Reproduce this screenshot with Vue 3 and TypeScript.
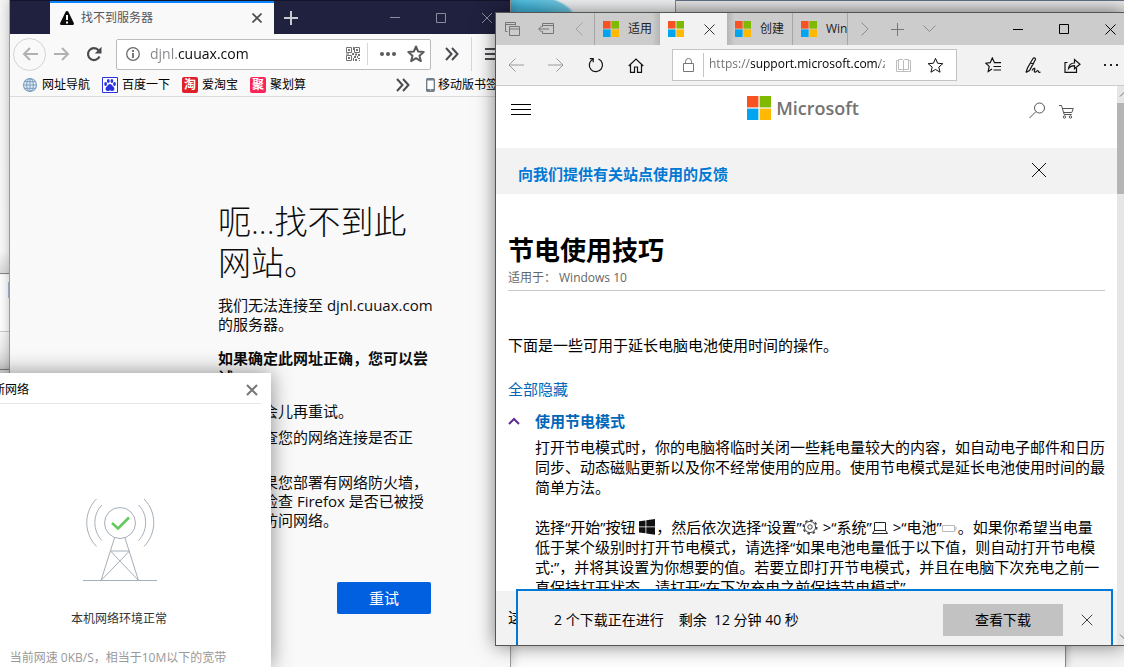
<script setup lang="ts">
interface Bookmark {
  label: string
  kind: 'globe' | 'paw' | 'tao' | 'ju'
}

const bookmarks: Bookmark[] = [
  { label: '网址导航', kind: 'globe' },
  { label: '百度一下', kind: 'paw' },
  { label: '爱淘宝', kind: 'tao' },
  { label: '聚划算', kind: 'ju' },
]

const suggestions: string[] = [
  '过会儿再重试。',
  '检查您的网络连接是否正常。',
  '如果您部署有网络防火墙，请检查 Firefox 是否已被授权访问网络。',
]
</script>

<template>
  <div class="desktop">
    <svg class="defs" width="0" height="0" aria-hidden="true">
      <symbol id="ms" viewBox="0 0 24 24">
        <path fill="#f65222" d="M0 0h11.400v11.400H0z" />
        <path fill="#7fba00" d="M12.600 0H24v11.400H12.600z" />
        <path fill="#00a4ef" d="M0 12.600h11.400V24H0z" />
        <path fill="#ffb900" d="M12.600 12.600H24V24H12.600z" />
      </symbol>
      <symbol id="cross" viewBox="0 0 16 16">
        <path fill="none" stroke="currentColor" d="M1 1l14 14M15 1L1 15" />
      </symbol>
      <symbol id="star" viewBox="0 0 18 18">
        <path fill="none" stroke="currentColor" stroke-linejoin="round" d="M9 1.500l2.200 5.100 5.500.5-4.200 3.600 1.300 5.400L9 13.200l-4.800 2.900 1.300-5.400-4.200-3.600 5.500-.5z" />
      </symbol>
      <symbol id="more-chevrons" viewBox="0 0 14 14">
        <path fill="none" stroke="currentColor" stroke-width="2" d="M1 1l5.500 6L1 13M7 1l5.500 6L7 13" />
      </symbol>
    </svg>

    <div class="back back-left"><i class="mark"></i></div>
    <div class="back back-side"><i class="chip"></i></div>
    <div class="back back-art"></div>
    <div class="back back-bar"></div>
    <div class="back back-low"></div>

    <!-- Firefox -->
    <section class="window firefox" aria-label="Firefox">
      <header class="fx-titlebar">
        <div class="fx-tab">
          <svg width="14" height="14" viewBox="0 0 14 14"><path fill="#0c0c0d" d="M7 0c.7 0 1.200.4 1.500 1l5.200 10.800c.6 1.200-.1 2.200-1.300 2.200H1.600C.4 14-.3 13 .3 11.800L5.500 1C5.800.4 6.300 0 7 0z" /><path stroke="#fff" stroke-width="2" d="M7 4v5M7 10.500v2" /></svg>
          <span class="fx-tab-title">找不到服务器</span>
          <button class="icon fx-tab-close" aria-label="关闭标签页"><svg width="10" height="10" viewBox="0 0 10 10"><path stroke="#4a4a4f" stroke-width="1.600" d="M.5.5l9 9M9.500.5l-9 9" /></svg></button>
        </div>
        <button class="icon fx-new" aria-label="新建标签页"><svg width="14" height="14" viewBox="0 0 14 14"><path stroke="#c9c9d0" stroke-width="2" d="M7 0v14M0 7h14" /></svg></button>
        <div class="spacer"></div>
        <button class="icon fx-ctl" aria-label="最小化"><svg width="10" height="10"><path stroke="#8b8b9d" d="M0 4.500h10" /></svg></button>
        <button class="icon fx-ctl" aria-label="最大化"><svg width="10" height="10"><path fill="none" stroke="#8b8b9d" d="M.5.5h9v9h-9z" /></svg></button>
        <button class="icon fx-ctl" aria-label="关闭"><svg width="10" height="10"><path stroke="#8b8b9d" d="M0 0l10 10M10 0L0 10" /></svg></button>
      </header>

      <nav class="fx-toolbar" aria-label="导航">
        <button class="icon fx-back" aria-label="后退"><svg width="16" height="14" viewBox="0 0 16 14"><path fill="none" stroke="#b1b1b3" stroke-width="2" d="M16 7H2M8 1L2 7l6 6" /></svg></button>
        <button class="icon fx-tool" aria-label="前进"><svg width="16" height="14" viewBox="0 0 16 14"><path fill="none" stroke="#b1b1b3" stroke-width="2" d="M0 7h14M8 1l6 6-6 6" /></svg></button>
        <button class="icon fx-tool" aria-label="刷新"><svg width="16" height="16" viewBox="0 0 16 16"><path fill="none" stroke="#4a4a4f" stroke-width="2.200" d="M12.600 4.200A6 6 0 1 0 13.500 10.500" /><path fill="#4a4a4f" d="M15.500.8v6.700H8.800z" /></svg></button>
        <div class="fx-address">
          <svg width="14" height="14" viewBox="0 0 14 14"><circle cx="7" cy="7" r="6.300" fill="none" stroke="#6b6b6f" stroke-width="1.300" /><path stroke="#6b6b6f" stroke-width="1.800" d="M7 6v5M7 3v2" /></svg>
          <input class="fx-url" type="text" value="djnl.cuuax.com" aria-label="地址">
          <svg class="qr" width="14" height="14" viewBox="0 0 14 14"><path fill="none" stroke="#737377" d="M.5.5h5v5h-5zM8.500.5h5v5h-5zM.5 8.500h5v5h-5z" /><path fill="#737377" d="M2 2h2v2H2zM10 2h2v2h-2zM2 10h2v2H2zM7 0h1v3H7zM6 6h2v2H6zM0 6.500h3v1H0zM9 6.500h2v2H9zM12 7h2v2h-2zM8 9h2v2H8zM11 9h1v2h-1zM7 11h1v3H7zM9 12h2v2H9zM12 11h2v1h-2zM13 13h1v1h-1z" /></svg>
          <i class="fx-rule"></i>
          <button class="icon dots" aria-label="页面操作"><svg width="16" height="4"><circle cx="2" cy="2" r="2" /><circle cx="8" cy="2" r="2" /><circle cx="14" cy="2" r="2" /></svg></button>
          <button class="icon fx-star" aria-label="添加书签"><svg width="18" height="18"><use href="#star" /></svg></button>
        </div>
        <button class="icon fx-more" aria-label="更多工具"><svg width="14" height="14"><use href="#more-chevrons" /></svg></button>
        <i class="fx-menu-rule"></i>
        <button class="icon fx-menu" aria-label="菜单"><svg width="16" height="12"><path stroke="#4a4a4f" stroke-width="2" d="M0 1h16M0 6h16M0 11h16" /></svg></button>
      </nav>

      <nav class="fx-bookmarks" aria-label="书签">
        <a v-for="b in bookmarks" :key="b.label" href="#" class="bookmark">
          <svg v-if="b.kind === 'globe'" width="16" height="16" viewBox="0 0 16 16"><circle cx="8" cy="8" r="6.500" fill="#e4eef8" stroke="#86a3c0" stroke-width="1.200" /><path fill="none" stroke="#789bbd" d="M8 1.500v13M1.500 8h13M2.600 4.700h10.800M2.600 11.300h10.800" /><ellipse cx="8" cy="8" rx="3.300" ry="6.500" fill="none" stroke="#789bbd" /></svg>
          <svg v-else-if="b.kind === 'paw'" width="16" height="16" viewBox="0 0 16 16"><path fill="#fff" stroke="#2932e1" d="M.5.5h15v15H.5z" /><g fill="#2932e1"><ellipse cx="3.600" cy="7" rx="1.400" ry="1.900" /><ellipse cx="6.300" cy="4" rx="1.400" ry="2" /><ellipse cx="9.900" cy="4" rx="1.400" ry="2" /><ellipse cx="12.500" cy="7" rx="1.400" ry="1.900" /><path d="M8 7c1.600 0 2.200 1.700 3.400 2.700 1.700 1.500 1.100 4.200-.9 4.200-1.200 0-1.600-.5-2.500-.5s-1.300.5-2.500.5c-2 0-2.600-2.700-.9-4.200C5.800 8.700 6.400 7 8 7z" /></g></svg>
          <span v-else class="stamp" :class="b.kind">{{ b.kind === 'tao' ? '淘' : '聚' }}</span>
          <span>{{ b.label }}</span>
        </a>
        <div class="spacer"></div>
        <button class="icon" aria-label="更多书签"><svg class="grey" width="14" height="14"><use href="#more-chevrons" /></svg></button>
        <a href="#" class="bookmark mobile">
          <svg width="9" height="14" viewBox="0 0 9 14"><rect x=".7" y=".7" width="7.600" height="12.600" rx="1" fill="#fff" stroke="#73808c" stroke-width="1.400" /><path stroke="#73808c" stroke-width="2" d="M1 1.500h7M1 12h7" /><path stroke="#fff" d="M4 12h1" /></svg>
          <span>移动版书签</span>
        </a>
      </nav>

      <main class="fx-page">
        <h1>呃...找不到此网站。</h1>
        <p>我们无法连接至 djnl.cuuax.com 的服务器。</p>
        <p class="strong">如果确定此网址正确，您可以尝试：</p>
        <ul>
          <li v-for="s in suggestions" :key="s">{{ s }}</li>
        </ul>
        <button class="retry">重试</button>
      </main>
    </section>

    <!-- Network check dialog -->
    <section class="window net" role="dialog" aria-label="诊断网络">
      <header class="net-head">
        <span>诊断网络</span>
        <button class="icon" aria-label="关闭"><svg width="12" height="12" viewBox="0 0 12 12"><path stroke="#777" stroke-width="2" d="M1 1l10 10M11 1L1 11" /></svg></button>
      </header>
      <svg class="tower" width="74" height="84" viewBox="0 0 74 84" fill="none" stroke="#a5afb9">
        <circle cx="37" cy="25" r="15.500" />
        <path d="M13.500 1C.5 14 .5 35 13.500 48.500M19 7c-9.500 9-9.500 26 0 35.500M61 1c13 13 13 34 0 47.500M55.500 7c9.500 9 9.500 26 0 35.500" />
        <path d="M31.500 40L18 82.500M42 40l13.500 42.500M27.500 53h19M27.500 53l28 29.500M46.500 53L18 82.500M0 82.500h74" />
        <path stroke="#5fc95c" stroke-width="2.500" d="M29 25l6 5.500L46 19.500" />
      </svg>
      <p class="net-state">本机网络环境正常</p>
      <p class="net-speed">当前网速 0KB/S，相当于10M以下的宽带</p>
    </section>

    <!-- Edge -->
    <section class="window edge" aria-label="Microsoft Edge">
      <header class="ed-tabs">
        <div class="ed-lead">
          <button class="icon" aria-label="已搁置的标签页"><svg width="15" height="15" viewBox="0 0 15 15" fill="none" stroke="#767676"><path d="M2.500 9.500h-2v-9h10v3M.5 2.500h10M4.500 4.500h10v9h-10zM4.500 7h10" /></svg></button>
          <button class="icon" aria-label="搁置标签页"><svg width="16" height="12" viewBox="0 0 16 12" fill="none" stroke="#767676"><path d="M4.500 4V.5h11v10h-11V8M4.500 2.500h11M11 6H.8M3.500 3L.8 6l2.700 3" /></svg></button>
          <button class="icon" aria-label="向左滚动"><svg width="8" height="14" viewBox="0 0 8 14" fill="none" stroke="#a3a3a3"><path d="M7.500.5L1 7l6.500 6.500" /></svg></button>
        </div>
        <button class="ed-tab near"><svg width="16" height="16"><use href="#ms" /></svg><span>适用</span></button>
        <div class="ed-tab active"><svg width="16" height="16"><use href="#ms" /></svg><button class="icon" aria-label="关闭标签页"><svg width="11" height="11" viewBox="0 0 11 11"><path stroke="#333" d="M.5.5l10 10M10.500.5l-10 10" /></svg></button></div>
        <button class="ed-tab after"><svg width="16" height="16"><use href="#ms" /></svg><span>创建</span></button>
        <button class="ed-tab cut"><svg width="16" height="16"><use href="#ms" /></svg><span>Windows</span></button>
        <div class="ed-tail">
          <button class="icon" aria-label="向右滚动"><svg width="8" height="14" viewBox="0 0 8 14" fill="none" stroke="#8c8c8c"><path d="M.5.5L7 7 .5 13.500" /></svg></button>
          <button class="icon" aria-label="新建标签页"><svg width="13" height="13"><path stroke="#777" d="M6.500 0v13M0 6.500h13" /></svg></button>
          <button class="icon" aria-label="标签页预览"><svg width="13" height="8" viewBox="0 0 13 8" fill="none" stroke="#8c8c8c"><path d="M.5.5l6 6 6-6" /></svg></button>
        </div>
        <div class="spacer"></div>
        <div class="ed-ctls">
          <button class="icon" aria-label="最小化"><svg width="10" height="10"><path stroke="#000" d="M0 5.500h10" /></svg></button>
          <button class="icon" aria-label="最大化"><svg width="10" height="10"><path fill="none" stroke="#000" d="M.5.5h9v9h-9z" /></svg></button>
          <button class="icon" aria-label="关闭"><svg width="11" height="11"><path stroke="#000" d="M.5.5l10 10M10.500.5l-10 10" /></svg></button>
        </div>
      </header>

      <nav class="ed-toolbar" aria-label="导航">
        <button class="icon" aria-label="后退"><svg width="16" height="14" viewBox="0 0 16 14" fill="none" stroke="#9b9b9b"><path d="M16 7H1M7.500.5L1 7l6.500 6.500" /></svg></button>
        <button class="icon" aria-label="前进"><svg width="16" height="14" viewBox="0 0 16 14" fill="none" stroke="#9b9b9b"><path d="M0 7h15M8.500.5L15 7l-6.500 6.500" /></svg></button>
        <button class="icon" aria-label="刷新"><svg width="16" height="16" viewBox="0 0 16 16" fill="none" stroke="#111" stroke-width="1.200"><path d="M10.500 2A6.600 6.600 0 1 1 4.500 2.400M1.800 1.700h3.400v3.600" /></svg></button>
        <button class="icon" aria-label="主页"><svg width="16" height="15" viewBox="0 0 16 15" fill="none" stroke="#111" stroke-width="1.200"><path d="M.7 8L8 1l7.300 7M2.500 6.500v7.800h4V9h3v5.300h4V6.500" /></svg></button>
        <div class="ed-address">
          <svg width="11" height="14" viewBox="0 0 11 14" fill="none" stroke="#777"><path d="M.5 5.500h10v8H.5zM2.500 5.500v-2a3 3 0 0 1 6 0v2" /></svg>
          <i></i>
          <input class="ed-url" type="text" value="https://support.microsoft.com/zh-cn" aria-label="地址">
          <button class="icon" aria-label="阅读视图"><svg width="15" height="14" viewBox="0 0 15 14" fill="none" stroke="#bdbdbd"><path d="M2.500 1.500h4l1 1 1-1h4v10h-4l-1 1-1-1h-4zM7.500 2.500v10M2 2.500H.5v11h14v-11H13" /></svg></button>
          <button class="icon ed-fav" aria-label="收藏"><svg width="17" height="17"><use href="#star" /></svg></button>
        </div>
        <div class="ed-actions">
          <button class="icon" aria-label="中心"><svg width="17" height="16" viewBox="0 0 17 16" fill="none" stroke="#111" stroke-width="1.200"><path d="M16 5.700H9.500L7.300 1 5.200 5.700.8 6.200l3.400 3.200-1 5L7 12M8.500 9.500H16M8.500 13H16" /></svg></button>
          <button class="icon" aria-label="添加备注"><svg width="16" height="17" viewBox="0 0 16 17" fill="none" stroke="#111" stroke-width="1.200"><path d="M1 15.500L2.500 11 8 1.500c1-1.500 3-.3 2.300 1.200L4.500 13.500 1 15.500M5 6l4 1M7 13.500c2-3 3.500-2.500 2.500 0-.7 2 1 2 2 .8 1.200-1.200 2-.5 2 .3 0 .9 1 .9 2 .4" /></svg></button>
          <button class="icon" aria-label="共享"><svg width="17" height="15" viewBox="0 0 17 15" fill="none" stroke="#111" stroke-width="1.200"><path d="M3.500 4.500H1v9.800h11.500V10M4.500 10.500c.5-4 2.500-5.500 6-5.500V1.500L16 6.300l-5.500 4.500V7.700c-3 0-4.500.8-6 2.800z" /></svg></button>
          <button class="icon" aria-label="设置及更多"><svg width="14" height="2" fill="#222"><path d="M0 0h2v2H0zM6 0h2v2H6zM12 0h2v2h-2z" /></svg></button>
        </div>
      </nav>

      <div class="ed-view">
        <div class="ed-page">
          <header class="ms-head">
            <button class="icon" aria-label="所有 Microsoft"><svg width="20" height="12"><path stroke="#000" d="M0 .5h20M0 5.500h20M0 10.500h20" /></svg></button>
            <a href="#" class="ms-brand"><svg width="24" height="24"><use href="#ms" /></svg><span>Microsoft</span></a>
            <div class="ms-tools">
              <button class="icon" aria-label="搜索"><svg width="17" height="17" viewBox="0 0 17 17" fill="none" stroke="#555"><circle cx="10.500" cy="6" r="5" /><path d="M7 9.500L.5 16" /></svg></button>
              <button class="icon cart" aria-label="购物车"><svg width="15" height="14" viewBox="0 0 15 14" fill="none" stroke="#555"><path d="M0 .5h2.500l2.700 9h7.500M3.300 3.500h11L12.800 7.500H4.500" /><circle cx="5.500" cy="12" r="1.200" /><circle cx="11.500" cy="12" r="1.200" /></svg></button>
            </div>
          </header>
          <div class="feedback">
            <a href="#">向我们提供有关站点使用的反馈</a>
            <button class="icon" aria-label="关闭"><svg width="16" height="16"><use href="#cross" /></svg></button>
          </div>
          <article>
            <h1>节电使用技巧</h1>
            <p class="applies"><span>适用于：</span><span>Windows 10</span></p>
            <p class="intro">下面是一些可用于延长电脑电池使用时间的操作。</p>
            <a href="#" class="hide-all">全部隐藏</a>
            <section class="tip">
              <button class="tip-title"><svg width="12" height="8" viewBox="0 0 12 8" fill="none" stroke="#5c2d91" stroke-width="2"><path d="M1 7l5-5 5 5" /></svg><span>使用节电模式</span></button>
              <p>打开节电模式时，你的电脑将临时关闭一些耗电量较大的内容，如自动电子邮件和日历<br>同步、动态磁贴更新以及你不经常使用的应用。使用节电模式是延长电池使用时间的最<br>简单方法。</p>
              <p>选择“开始”按钮 <svg width="16" height="16" viewBox="0 0 16 16" fill="#111"><path d="M0 2.300l6.500-.9v6H0zM7.300 1.300L16 0v7.400H7.300zM0 8.300h6.500v6L0 13.500zM7.300 8.300H16v7.500l-8.700-1.300z" /></svg>，然后依次选择“设置”<svg width="16" height="16" viewBox="0 0 16 16" fill="none" stroke="#444"><circle cx="8" cy="8" r="5.600" /><circle cx="8" cy="8" r="2.200" /><circle cx="8" cy="8" r="6.800" stroke-width="1.600" stroke-dasharray="2.600 2.740" /></svg> &gt;“系统”<svg width="16" height="14" viewBox="0 0 16 14" fill="none" stroke="#222"><path d="M2.500 1.500h11v8h-11zM.5 12.500h15l-2-3h-11z" /></svg> &gt;“电池”<svg width="15" height="12" viewBox="0 0 15 12" fill="none" stroke="#bbb"><path d="M.5 2.500h12v6H.5zM12.500 4h1.500v3h-1.500" /></svg>。如果你希望当电量<br>低于某个级别时打开节电模式，请选择“如果电池电量低于以下值，则自动打开节电模<br>式:”，并将其设置为你想要的值。若要立即打开节电模式，并且在电脑下次充电之前一<br>直保持打开状态，请打开“在下次充电之前保持节电模式”。</p>
            </section>
          </article>
          <footer class="site-foot">这</footer>
        </div>
        <div class="scroll" aria-hidden="true">
          <svg width="14" height="17" viewBox="0 0 14 17" fill="none" stroke="#777"><path d="M3 10.500l4-4 4 4" /></svg>
          <i></i>
          <svg width="14" height="17" viewBox="0 0 14 17" fill="none" stroke="#777"><path d="M3 6.500l4 4 4-4" /></svg>
        </div>
        <div class="download" role="status">
          <span>2 个下载正在进行</span>
          <span>剩余&nbsp; 12 分钟 40 秒</span>
          <div class="spacer"></div>
          <button class="view">查看下载</button>
          <button class="icon" aria-label="关闭"><svg width="12" height="12"><use href="#cross" /></svg></button>
        </div>
      </div>
    </section>
  </div>
</template>

<style>
body {
  margin: 0;
}
</style>

<style scoped>
.desktop {
  position: relative;
  height: 100vh;
  overflow: hidden;
  background: #f4f4f4;
  font: 12px/18px "Open Sans", "Noto Sans CJK SC", sans-serif;
  color: #000;
}
.desktop *,
.desktop {
  box-sizing: border-box;
}
.defs {
  position: absolute;
}
svg {
  flex: none;
  display: block;
}
h1,
p,
ul {
  margin: 0;
  padding: 0;
  font-weight: 400;
}
button,
input {
  margin: 0;
  padding: 0;
  border: 0;
  background: none;
  font: inherit;
  color: inherit;
  border-radius: 0;
}
input {
  min-width: 0;
  outline: 0;
}
a {
  color: inherit;
  text-decoration: none;
}
.icon {
  display: flex;
  align-items: center;
  justify-content: center;
  flex: none;
}
.spacer {
  flex: 1;
}
.window {
  position: absolute;
  display: flex;
  flex-direction: column;
}

/* Windows further back */
.back {
  position: absolute;
}
.back-left {
  left: 0;
  top: 0;
  width: 10px;
  height: 274px;
  background: linear-gradient(#f6f6f6, #fbfbfb 92%, #dcdcdc);
  border-bottom: 1px solid #888;
}
.mark {
  position: absolute;
  right: 0;
  top: 121px;
  width: 1px;
  height: 18px;
  background: #46525e;
}
.back-side {
  left: 0;
  top: 275px;
  width: 10px;
  height: 95px;
  background: linear-gradient(#fff 56px, #ccc 56px, #ccc 57px, #fafafa 57px, #ddd);
  border-bottom: 1px solid #888;
}
.chip {
  position: absolute;
  right: 0;
  top: 7px;
  width: 2px;
  height: 16px;
  background: #a9bdd3;
}
.back-art {
  left: 510px;
  top: 0;
  width: 165px;
  height: 40px;
  background: radial-gradient(ellipse 66px 26px at 0 18px, #45b9de 50%, #6cc8e4 94%, transparent), #f1f3f4;
}
.back-bar {
  left: 675px;
  right: 0;
  top: 0;
  height: 40px;
  background: linear-gradient(#5f7385 1px, #e9e9e9 1px, #d9d9d9 12px);
  border-left: 1px solid #888;
}
.back-low {
  left: 511px;
  right: 58px;
  bottom: 0;
  height: 60px;
  background: #fdfdfd;
  border-right: 1px solid #888;
  box-shadow: 0 0 8px rgba(0, 0, 0, 0.3);
}

/* Firefox */
.firefox {
  left: 10px;
  top: 0;
  bottom: 0;
  width: 500px;
  background: #f9f9fa;
  box-shadow: 0 0 0 1px #9a9a9a, 0 0 12px rgba(0, 0, 0, 0.3);
}
.fx-titlebar {
  display: flex;
  height: 34px;
  padding-left: 40px;
  background: #20213f;
  border-top: 1px solid #14152b;
}
.fx-tab {
  display: flex;
  align-items: center;
  width: 224px;
  padding: 0 12px 2px 10px;
  background: #f9f9fa;
  border-top: 2px solid #0a84ff;
}
.fx-tab-title {
  flex: 1;
  margin-left: 7px;
  color: #55555a;
}
.fx-new {
  width: 34px;
}
.fx-ctl {
  width: 46px;
}
.fx-toolbar {
  display: flex;
  align-items: center;
  height: 40px;
  padding-left: 3px;
  overflow: hidden;
}
.fx-back {
  width: 33px;
  height: 33px;
  border: 1px solid #d2d2d3;
  border-radius: 50%;
}
.fx-tool {
  width: 32px;
}
.fx-address {
  display: flex;
  align-items: center;
  width: 315px;
  height: 31px;
  margin-left: 6px;
  padding: 0 5px 0 9px;
  background: #fff;
  border: 1px solid #bcbcbd;
  border-radius: 2px;
}
.fx-url {
  flex: 1;
  margin-left: 10px;
  font-size: 14px;
  background: linear-gradient(90deg, #85858a 28px, #0c0c0d 28px);
  background-clip: text;
  -webkit-background-clip: text;
  color: transparent;
}
.fx-rule {
  width: 1px;
  height: 22px;
  margin: 0 12px 0 7px;
  background: #d7d7db;
}
.dots {
  margin-right: 11px;
  fill: #5a5a5e;
}
.fx-star {
  color: #5a5a5e;
  stroke-width: 2;
}
.fx-more {
  margin-left: 14px;
  color: #4a4a4f;
}
.fx-menu-rule {
  width: 1px;
  height: 34px;
  margin: 0 13px 0 12px;
  background: #d7d7db;
}
.fx-bookmarks {
  display: flex;
  align-items: center;
  gap: 12px;
  height: 23px;
  padding: 0 12px 1px;
  border-bottom: 1px solid #dcdcdd;
}
.bookmark {
  display: flex;
  align-items: center;
  gap: 4px;
  white-space: nowrap;
}
.grey {
  color: #4a4a4f;
}
.mobile {
  gap: 3px;
  margin-left: 4px;
}
.stamp {
  width: 16px;
  height: 16px;
  border-radius: 2px;
  color: #fff;
  font-weight: 700;
  line-height: 16px;
  text-align: center;
}
.tao {
  background: #df2029;
}
.ju {
  background: #fb2559;
}
.fx-page {
  display: flex;
  flex-direction: column;
  width: 427px;
  padding: 104px 0 0 208px;
  font-size: 15px;
  line-height: 19px;
  color: #0c0c0d;
}
.fx-page h1 {
  margin-bottom: 13px;
  font-size: 33px;
  font-weight: 300;
  line-height: 41px;
}
.fx-page p {
  margin-bottom: 15px;
}
.fx-page .strong {
  font-weight: 700;
}
.fx-page ul {
  display: flex;
  flex-direction: column;
  gap: 7px;
  padding-left: 30px;
  list-style: none;
}
.retry {
  align-self: flex-end;
  width: 94px;
  height: 32px;
  margin: 52px 6px 0 0;
  border-radius: 2px;
  background: #0060df;
  color: #fff;
}

/* Network dialog */
.net {
  left: -31px;
  top: 373px;
  bottom: 0;
  width: 302px;
  padding: 0 10px;
  align-items: center;
  background: #fff;
  box-shadow: 0 0 20px rgba(0, 0, 0, 0.45);
}
.net-head {
  display: flex;
  align-items: center;
  justify-content: space-between;
  align-self: stretch;
  height: 31px;
  padding: 4px 3px 0 2px;
  border-bottom: 1px solid #e6e6e6;
}
.tower {
  margin-top: 94px;
}
.net-state {
  margin: 28px 2px 21px 0;
  color: #333;
}
.net-speed {
  margin-right: 4px;
  color: #999;
  white-space: nowrap;
}

/* Edge */
.edge {
  left: 495px;
  right: 0;
  top: 12px;
  bottom: 21px;
  background: #fff;
  border: solid #555;
  border-width: 1px 0 1px 1px;
  box-shadow: 0 0 18px rgba(0, 0, 0, 0.5);
}
.ed-tabs {
  display: flex;
  height: 32px;
  background: #ccc;
}
.ed-lead {
  display: flex;
  align-items: center;
  gap: 18px;
  width: 99px;
  padding-left: 9px;
  border-right: 1px solid #a6a6a6;
}
.ed-lead .icon:last-child {
  margin-left: 3px;
}
.ed-tab {
  display: flex;
  align-items: center;
  gap: 9px;
  width: 66px;
  padding-left: 8px;
  border-right: 1px solid #a6a6a6;
  overflow: hidden;
  color: #222;
}
.ed-tab.near {
  width: 65px;
  border-right: 0;
  background: linear-gradient(90deg, #ccc 88%, #b5b5b5);
}
.ed-tab.active {
  gap: 20px;
  width: 67px;
  border-right: 0;
  background: #f2f2f2;
}
.ed-tab.after {
  background: linear-gradient(90deg, #b5b5b5, #ccc 12%);
}
.ed-tab.cut {
  width: 55px;
}
.ed-tail {
  display: flex;
  align-items: center;
  gap: 22px;
  padding-left: 13px;
}
.ed-tail .icon:last-child {
  margin-left: -3px;
}
.ed-ctls {
  display: flex;
  gap: 36px;
  padding-right: 8px;
}
.ed-toolbar {
  display: flex;
  align-items: center;
  gap: 24px;
  height: 41px;
  padding-left: 12px;
  background: #f2f2f2;
  border-bottom: 1px solid #ccc;
  overflow: hidden;
}
.ed-address {
  display: flex;
  align-items: center;
  flex: 1;
  height: 32px;
  margin-left: 4px;
  padding: 0 12px 0 10px;
  background: #fff;
  border: 1px solid #c4c4c4;
}
.ed-address > i {
  width: 1px;
  height: 24px;
  margin: 0 5px 0 9px;
  background: #c4c4c4;
}
.ed-url {
  flex: 1;
  margin-right: 11px;
  padding-bottom: 3px;
  background: linear-gradient(90deg, #6d6d6d 42px, #000 42px, #000 170px, #777 170px);
  background-clip: text;
  -webkit-background-clip: text;
  color: transparent;
}
.ed-fav {
  margin-left: 16px;
}
.ed-actions {
  display: flex;
  align-items: center;
  gap: 23px;
  margin-left: 4px;
  padding-right: 6px;
}
.ed-view {
  position: relative;
  display: flex;
  flex: 1;
  min-height: 0;
  overflow: hidden;
}
.ed-page {
  display: flex;
  flex-direction: column;
  flex: 1;
  min-width: 0;
}
.ms-head {
  display: flex;
  align-items: center;
  justify-content: space-between;
  flex: none;
  height: 62px;
  padding: 0 43px 14px 15px;
}
.ms-brand {
  display: flex;
  align-items: center;
  gap: 5px;
  margin: 0 0 4px 46px;
  color: #737373;
  font-size: 18px;
  font-weight: 600;
  line-height: 24px;
}
.ms-tools {
  display: flex;
  align-items: center;
  gap: 13px;
}
.cart {
  padding-top: 4px;
}
.feedback {
  display: flex;
  align-items: center;
  justify-content: space-between;
  flex: none;
  height: 46px;
  padding: 0 70px 0 22px;
  background: #f2f2f2;
  color: #0078d4;
  font-size: 15px;
  font-weight: 600;
}
.feedback a {
  padding-top: 6px;
}
.feedback .icon {
  padding-bottom: 3px;
  color: #111;
}
article {
  flex: 1 1 0;
  min-height: 0;
  overflow: hidden;
  padding: 39px 12px 0 12px;
  font-size: 15px;
  line-height: 20px;
}
article h1 {
  font-size: 26px;
  font-weight: 700;
  line-height: 34px;
}
.applies {
  display: flex;
  gap: 3px;
  margin: 2px 0 44px;
  padding-bottom: 3px;
  border-bottom: 1px solid #c8c8c8;
  color: #666;
  font-size: 12px;
  line-height: 18px;
}
.hide-all {
  display: block;
  margin-top: 24px;
  color: #0067b8;
}
.tip {
  margin-top: 12px;
  padding-left: 27px;
}
.tip-title {
  display: flex;
  align-items: center;
  gap: 15px;
  margin: 0 0 6px -27px;
  color: #0067b8;
  font-weight: 700;
}
.tip p {
  margin-bottom: 20px;
  white-space: nowrap;
}
.tip p svg {
  display: inline-block;
  margin-right: 1px;
  vertical-align: -2px;
}
.site-foot {
  flex: none;
  height: 54px;
  padding: 16px 12px;
  background: #f2f2f2;
  font-size: 15px;
  line-height: 20px;
}
.scroll {
  display: flex;
  flex-direction: column;
  align-items: flex-start;
  flex: none;
  width: 7px;
  overflow: hidden;
  background: #e6e6e6;
}
.scroll i {
  width: 14px;
  height: 91px;
  margin-bottom: auto;
  background: #b5b5b5;
}
.download {
  position: absolute;
  left: 20px;
  right: 11px;
  bottom: 0;
  display: flex;
  align-items: center;
  height: 56px;
  padding: 3px 18px 0 36px;
  gap: 15px;
  background: #f2f2f2;
  border: solid #0078d7;
  border-width: 2px 2px 0;
  font-size: 14px;
}
.view {
  width: 120px;
  height: 32px;
  margin-right: 3px;
  background: #c2c2c2;
}
</style>
